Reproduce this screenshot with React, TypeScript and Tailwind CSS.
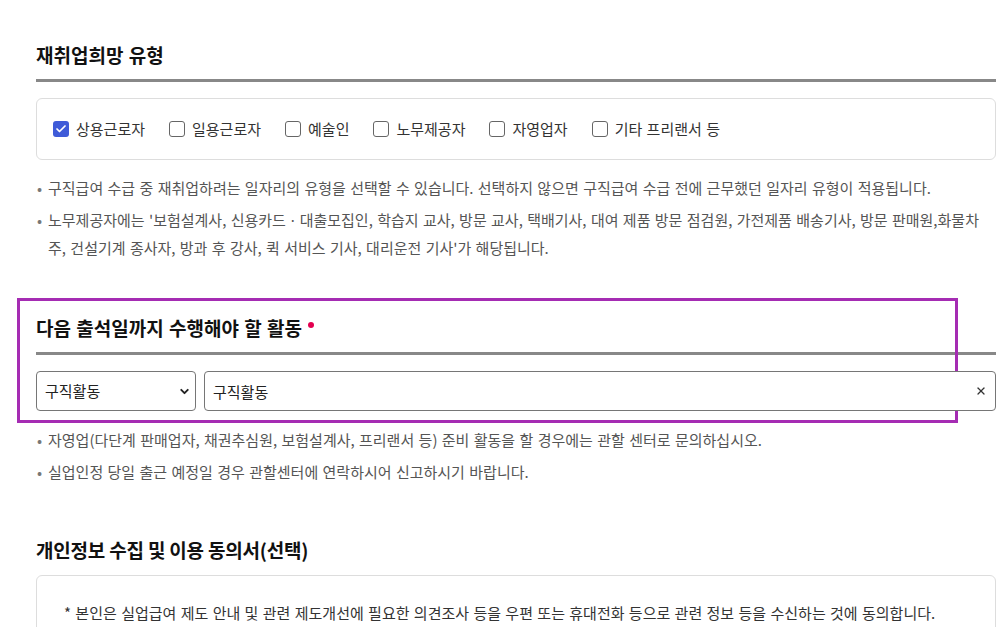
import { ChevronDown, X, Check } from 'lucide-react';

const font = { fontFamily: '"Noto Sans CJK KR", "Noto Sans", sans-serif' };

const jobTypes = [
  { label: '상용근로자', checked: true },
  { label: '일용근로자', checked: false },
  { label: '예술인', checked: false },
  { label: '노무제공자', checked: false },
  { label: '자영업자', checked: false },
  { label: '기타 프리랜서 등', checked: false },
];

function CheckItem({ label, checked }: { label: string; checked: boolean }) {
  return (
    <label className="flex items-center gap-[7px] text-[15px] leading-[20px] text-[#333] [word-spacing:1px]">
      {checked ? (
        <span className="flex h-4 w-4 items-center justify-center rounded-[3px] bg-[#3f5bd8]">
          <Check className="h-3 w-3 text-white" strokeWidth={3.5} />
        </span>
      ) : (
        <span className="h-4 w-4 rounded-[3px] border border-[#666] bg-white" />
      )}
      {label}
    </label>
  );
}

function Notes({ items, className }: { items: string[]; className: string }) {
  return (
    <ul className={`flex flex-col gap-1 text-[15px] leading-[28px] text-[#555] [word-spacing:1px] ${className}`}>
      {items.map((t) => (
        <li key={t} className="flex">
          <span className="w-[12px] shrink-0 pl-[1px] text-[#777]">•</span>
          <span>{t}</span>
        </li>
      ))}
    </ul>
  );
}

function SectionTitle({ children }: { children: React.ReactNode }) {
  return (
    <div className="border-b-[3px] border-[#888] pb-[11px]">
      <h3 className="flex items-start text-[19px] font-bold leading-[26px] text-[#111] [word-spacing:1px]">
        {children}
      </h3>
    </div>
  );
}

export default function App() {
  return (
    <div className="min-h-screen bg-white pl-[36px] pt-[42px]" style={font}>
      <div className="w-[960px]">
        <SectionTitle>재취업희망 유형</SectionTitle>
        <div className="mt-4 flex gap-[24px] rounded-[6px] border border-[#ddd] px-4 py-5">
          {jobTypes.map((j) => (
            <CheckItem key={j.label} label={j.label} checked={j.checked} />
          ))}
        </div>
        <Notes
          className="mt-[14px]"
          items={[
            '구직급여 수급 중 재취업하려는 일자리의 유형을 선택할 수 있습니다. 선택하지 않으면 구직급여 수급 전에 근무했던 일자리 유형이 적용됩니다.',
            "노무제공자에는 '보험설계사, 신용카드ㆍ대출모집인, 학습지 교사, 방문 교사, 택배기사, 대여 제품 방문 점검원, 가전제품 배송기사, 방문 판매원,화물차주, 건설기계 종사자, 방과 후 강사, 퀵 서비스 기사, 대리운전 기사'가 해당됩니다.",
          ]}
        />

        <div className="relative mt-[53px]">
          <div className="pointer-events-none absolute left-[-19px] top-[-17px] h-[125px] w-[941px] border-[3px] border-[#a52cb3]" />
          <SectionTitle>
            다음 출석일까지 수행해야 할 활동
            <span className="ml-[6px] mt-[7px] h-[6px] w-[6px] rounded-full bg-[#e3004f]" />
          </SectionTitle>
          <div className="mt-4 flex gap-[8px]">
            <div className="relative w-[160px]">
              <select
                defaultValue="구직활동"
                className="h-[40px] w-full appearance-none rounded-[4px] border border-[#767676] bg-white pl-[8px] text-[15px] text-[#222] outline-none"
              >
                <option>구직활동</option>
              </select>
              <ChevronDown
                className="pointer-events-none absolute right-[5px] top-[14px] h-[13px] w-[13px] text-[#222]"
                strokeWidth={3.5}
              />
            </div>
            <div className="relative flex-1">
              <input
                readOnly
                value="구직활동"
                className="h-[40px] w-full rounded-[4px] border border-[#767676] bg-white pl-[8px] text-[15px] text-[#222] outline-none"
              />
              <X
                className="absolute right-[9px] top-[14px] h-[12px] w-[12px] text-[#333]"
                strokeWidth={2.5}
              />
            </div>
          </div>
        </div>
        <Notes
          className="mt-[15px]"
          items={[
            '자영업(다단계 판매업자, 채권추심원, 보험설계사, 프리랜서 등) 준비 활동을 할 경우에는 관할 센터로 문의하십시오.',
            '실업인정 당일 출근 예정일 경우 관할센터에 연락하시어 신고하시기 바랍니다.',
          ]}
        />

        <h3 className="mt-[51px] text-[19px] font-bold leading-[26px] tracking-[-0.2px] text-[#111]">
          개인정보 수집 및 이용 동의서(선택)
        </h3>
        <div className="mt-3 rounded-t-[6px] border border-[#ddd] px-[27px] pb-6 pt-[27px]">
          <p className="text-[15px] leading-[20px] text-[#333] [word-spacing:1px]">
            * 본인은 실업급여 제도 안내 및 관련 제도개선에 필요한 의견조사 등을 우편 또는 휴대전화 등으로 관련 정보 등을 수신하는 것에 동의합니다.
          </p>
        </div>
      </div>
    </div>
  );
}
